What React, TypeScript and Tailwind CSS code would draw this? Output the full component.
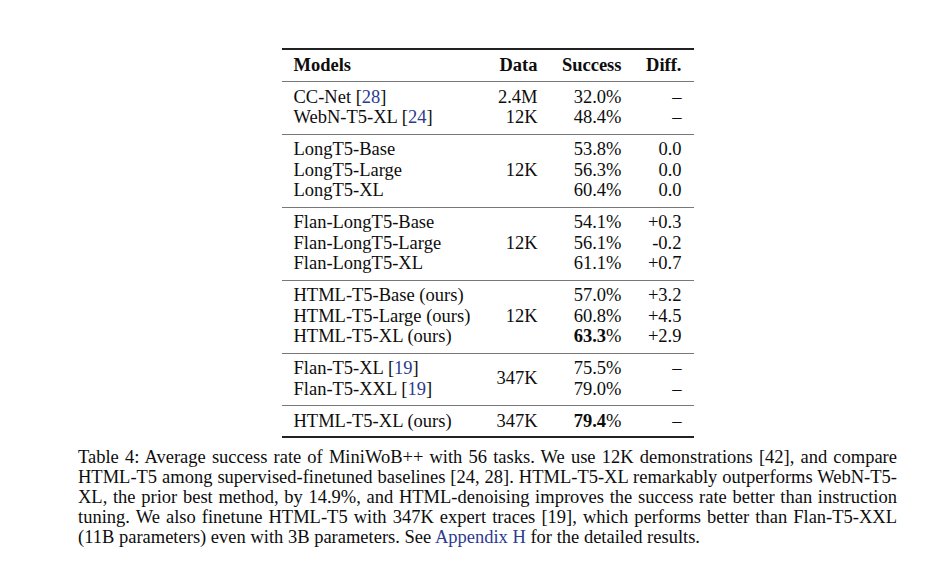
import React from "react";

type Row = { model: React.ReactNode; success: React.ReactNode; diff: string };
type Group = { data: string; rows: Row[] };

const Cite = ({ n }: { n: string }) => (
  <span>
    [<span className="text-[#2c3a8f]">{n}</span>]
  </span>
);

const Bold = ({ v }: { v: string }) => (
  <span>
    <span className="font-bold">{v}</span>%
  </span>
);

const GROUPS: Group[] = [
  {
    data: "",
    rows: [
      { model: <>CC-Net <Cite n="28" /></>, success: "32.0%", diff: "–" },
      { model: <>WebN-T5-XL <Cite n="24" /></>, success: "48.4%", diff: "–" },
    ],
  },
  {
    data: "12K",
    rows: [
      { model: "LongT5-Base", success: "53.8%", diff: "0.0" },
      { model: "LongT5-Large", success: "56.3%", diff: "0.0" },
      { model: "LongT5-XL", success: "60.4%", diff: "0.0" },
    ],
  },
  {
    data: "12K",
    rows: [
      { model: "Flan-LongT5-Base", success: "54.1%", diff: "+0.3" },
      { model: "Flan-LongT5-Large", success: "56.1%", diff: "-0.2" },
      { model: "Flan-LongT5-XL", success: "61.1%", diff: "+0.7" },
    ],
  },
  {
    data: "12K",
    rows: [
      { model: "HTML-T5-Base (ours)", success: "57.0%", diff: "+3.2" },
      { model: "HTML-T5-Large (ours)", success: "60.8%", diff: "+4.5" },
      { model: "HTML-T5-XL (ours)", success: <Bold v="63.3" />, diff: "+2.9" },
    ],
  },
  {
    data: "347K",
    rows: [
      { model: <>Flan-T5-XL <Cite n="19" /></>, success: "75.5%", diff: "–" },
      { model: <>Flan-T5-XXL <Cite n="19" /></>, success: "79.0%", diff: "–" },
    ],
  },
  {
    data: "347K",
    rows: [{ model: "HTML-T5-XL (ours)", success: <Bold v="79.4" />, diff: "–" }],
  },
];

const ROW = "h-[20.5px] leading-[20.5px] whitespace-nowrap";

function GroupBlock({ group, first }: { group: Group; first: boolean }) {
  // the first group has its own data per row
  return (
    <div className="flex border-t border-[#777] pl-3 pr-3 pt-[4.5px] pb-[6px]">
      <div className="flex flex-1 flex-col">
        {group.rows.map((r, i) => (
          <div key={i} className={ROW}>
            {r.model}
          </div>
        ))}
      </div>
      <div className="flex w-[60px] flex-col justify-center text-right">
        {first ? (
          <>
            <div className={ROW}>2.4M</div>
            <div className={ROW}>12K</div>
          </>
        ) : (
          <div className={ROW}>{group.data}</div>
        )}
      </div>
      <div className="flex w-[84px] flex-col text-right">
        {group.rows.map((r, i) => (
          <div key={i} className={ROW}>
            {r.success}
          </div>
        ))}
      </div>
      <div className="flex w-[60px] flex-col text-right">
        {group.rows.map((r, i) => (
          <div key={i} className={ROW}>
            {r.diff}
          </div>
        ))}
      </div>
    </div>
  );
}

const LINE = "text-justify [text-align-last:justify] whitespace-nowrap";

export default function App() {
  return (
    <div className="min-h-[564px] w-[950px] bg-white font-['Liberation_Serif',serif] text-[18.5px] text-[#0d0d0d]">
      <div className="ml-[78px] w-[819px] pt-[48px]">
        {/* table */}
        <div className="mx-auto w-[412px]">
          <div className="border-t-2 border-[#222]" />
          <div className="flex pl-3 pr-3 pt-[4.5px] pb-[6px] font-bold">
            <div className={`flex-1 ${ROW}`}>Models</div>
            <div className={`w-[60px] text-right ${ROW}`}>Data</div>
            <div className={`w-[84px] text-right ${ROW}`}>Success</div>
            <div className={`w-[60px] text-right ${ROW}`}>Diff.</div>
          </div>
          {GROUPS.map((g, i) => (
            <GroupBlock key={i} group={g} first={i === 0} />
          ))}
          <div className="-mt-[1.5px] border-t-2 border-[#222]" />
        </div>

        {/* caption */}
        <div className="mt-[9px] leading-[20px]">
          <div className={LINE}>
            Table 4: Average success rate of MiniWoB++ with 56 tasks. We use 12K demonstrations [42], and compare
          </div>
          <div className={LINE}>
            HTML-T5 among supervised-finetuned baselines [24, 28]. HTML-T5-XL remarkably outperforms WebN-T5-
          </div>
          <div className={LINE}>
            XL, the prior best method, by 14.9%, and HTML-denoising improves the success rate better than instruction
          </div>
          <div className={LINE}>
            tuning. We also finetune HTML-T5 with 347K expert traces [19], which performs better than Flan-T5-XXL
          </div>
          <div className="whitespace-nowrap">
            (11B parameters) even with 3B parameters. See{" "}
            <span className="text-[#2c3a8f]">Appendix H</span> for the detailed results.
          </div>
        </div>
      </div>
    </div>
  );
}
